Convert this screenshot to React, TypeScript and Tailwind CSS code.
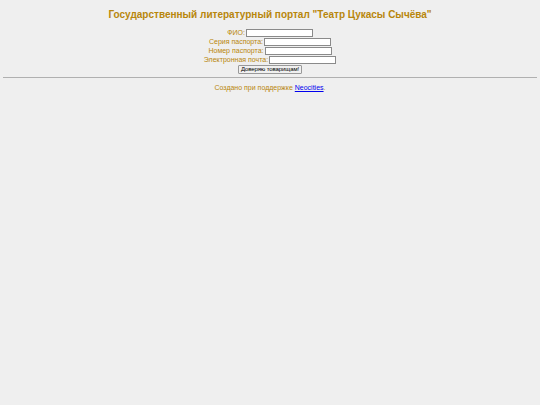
import React from "react";

export default function App() {
  const rows = ["ФИО:", "Серия паспорта:", "Номер паспорта:", "Электронная почта:"];
  return (
    <div className="min-h-[405px] w-[540px] bg-[#efefef] text-[#b8860b]" style={{ fontFamily: '"Liberation Sans", Arial, sans-serif' }}>
      <div className="pt-[8px] text-center text-[10px] font-bold leading-[13px]">
        Государственный литературный портал "Театр Цукасы Сычёва"
      </div>
      <div className="mt-[7px] flex flex-col items-center text-[7px] leading-[9px]">
        {rows.map((r) => (
          <div key={r} className="flex h-[9px] items-center gap-[1px]">
            <span>{r}</span>
            <span className="h-[8px] w-[67px] border border-[#8a8a8a] bg-white" />
          </div>
        ))}
        <div className="mt-[1px] flex h-[9px] items-center rounded-[1px] border border-[#999] bg-[#f0f0f0] px-[2px] text-[6px] leading-[7px] text-black">
          <span className="tracking-[-0.1px]">Доверяю товарищам!</span>
        </div>
      </div>
      <div className="mx-[3px] mt-[3px] h-[2px] border-t border-[#b0b0b0] border-b-[#e0e0e0]" />
      <div className="mt-[4px] text-center text-[7px] leading-[9px]">
        Создано при поддержке <a className="text-[#0000ee] underline">Neocities</a>.
      </div>
    </div>
  );
}
